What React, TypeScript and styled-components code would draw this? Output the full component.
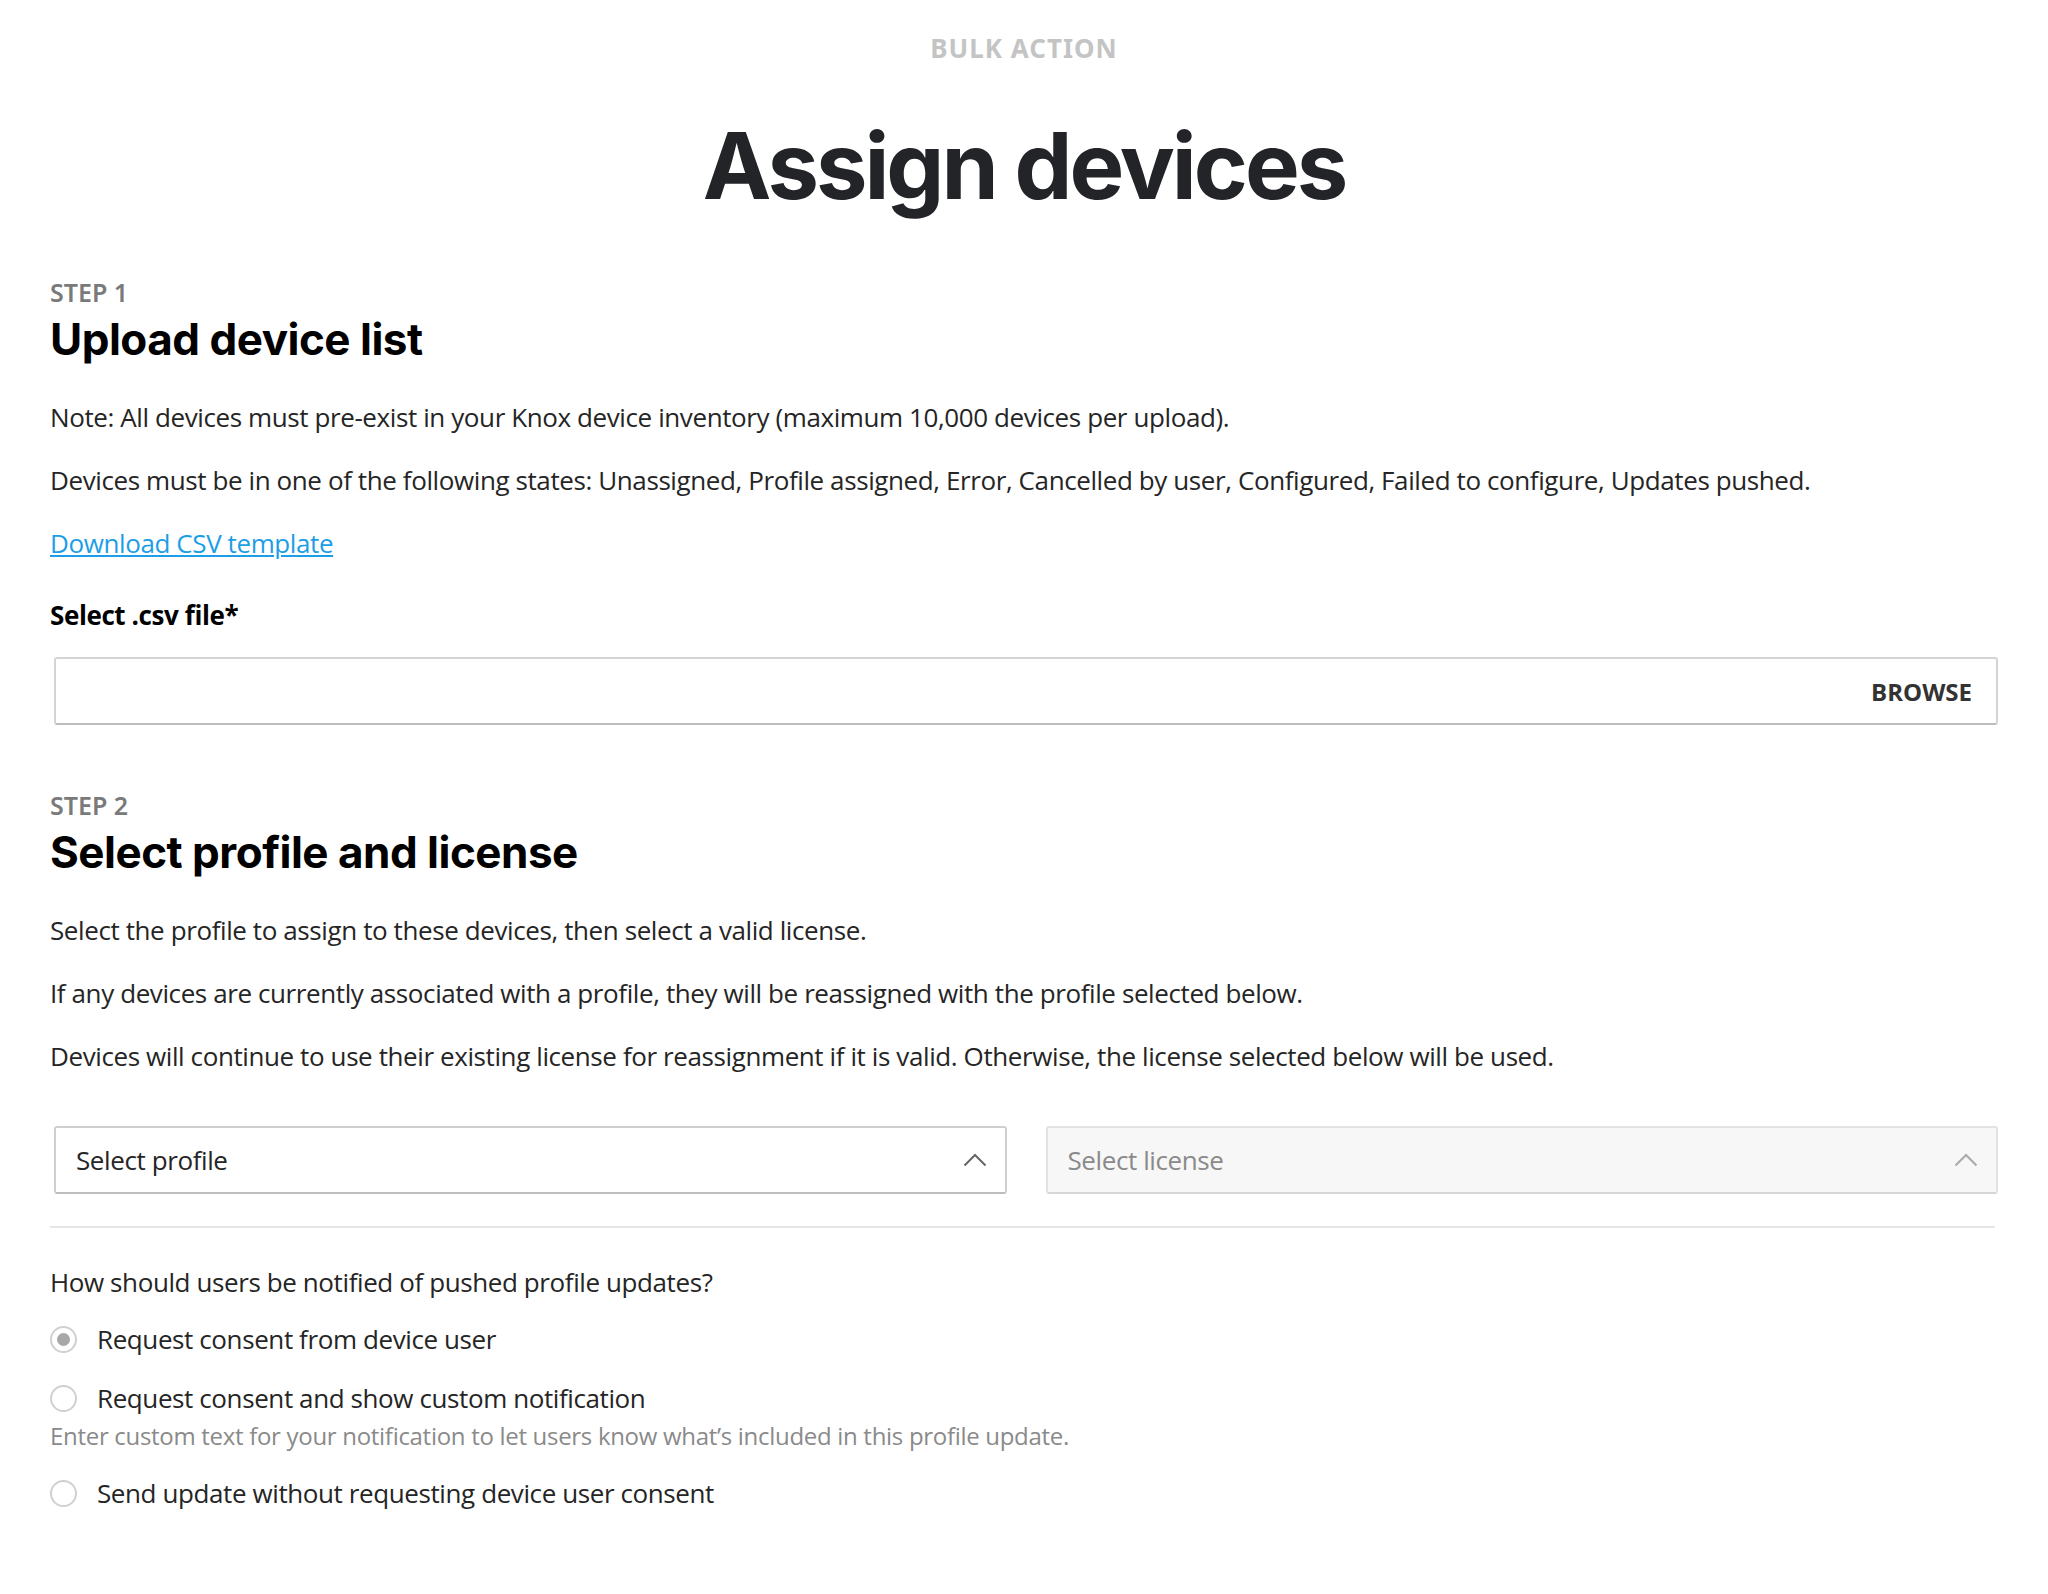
import React from "react";
import styled, { createGlobalStyle } from "styled-components";

const Global = createGlobalStyle`
  html, body { margin: 0; padding: 0; background: #fff; }
  body { font-family: "Open Sans", "Noto Sans", sans-serif; color: #252525; }
`;

const Page = styled.div`
  padding: 28px 50px 40px 50px;
  display: flex;
  flex-direction: column;
`;

const Eyebrow = styled.div`
  text-align: center;
  font-family: "Noto Sans", sans-serif;
  font-weight: 700;
  font-size: 26px;
  letter-spacing: 1px;
  color: #c4c4c4;
  line-height: 40px;
`;

const Title = styled.h1`
  margin: 48px 0 0;
  text-align: center;
  font-family: "Inter", sans-serif;
  font-weight: 700;
  font-size: 92px;
  letter-spacing: -3px;
  line-height: 100px;
  color: #222428;
`;

const Step = styled.div<{ $top: number }>`
  margin-top: ${(p) => p.$top}px;
  font-family: "Noto Sans", sans-serif;
  font-weight: 600;
  font-size: 25px;
  line-height: 32px;
  color: #7a7a7a;
`;

const Heading = styled.h2`
  margin: 4px 0 20px;
  font-family: "Inter", sans-serif;
  font-weight: 700;
  font-size: 44px;
  letter-spacing: -0.5px;
  line-height: 54px;
  color: #000;
`;

const Para = styled.p`
  margin: 0;
  font-size: 26px;
  line-height: 63px;
  letter-spacing: -0.4px;
  color: #252525;
`;

const Link = styled.a`
  font-size: 26px;
  line-height: 63px;
  letter-spacing: -0.4px;
  color: #1c9ee6;
  text-decoration: underline;
  cursor: pointer;
`;

const Label = styled.div`
  margin-top: 20px;
  font-size: 26px;
  font-weight: 700;
  line-height: 40px;
  letter-spacing: -0.4px;
  color: #000;
`;

const FileBox = styled.div`
  margin: 22px 0 0 4px;
  height: 64px;
  border: 2px solid #d4d4d4;
  border-bottom-color: #bdbdbd;
  border-radius: 3px;
  display: flex;
  align-items: center;
  justify-content: flex-end;
  padding: 0 24px;
`;

const Browse = styled.span`
  font-size: 24px;
  font-weight: 700;
  color: #333;
`;

const SelectRow = styled.div`
  margin: 38px 0 0 4px;
  display: grid;
  grid-template-columns: 1fr 1fr;
  gap: 39px;
`;

const SelectBox = styled.div<{ $disabled?: boolean }>`
  height: 64px;
  border: 2px solid ${(p) => (p.$disabled ? "#e2e2e2" : "#cfcfcf")};
  border-bottom-color: ${(p) => (p.$disabled ? "#d6d6d6" : "#bdbdbd")};
  border-radius: 3px;
  background: ${(p) => (p.$disabled ? "#f7f7f7" : "#fff")};
  display: flex;
  align-items: center;
  justify-content: space-between;
  padding: 0 18px 0 20px;
  font-size: 26px;
  letter-spacing: -0.4px;
  color: ${(p) => (p.$disabled ? "#8a8a8a" : "#252525")};
`;

const Divider = styled.hr`
  margin: 32px 3px 0 0;
  border: none;
  border-top: 2px solid #e6e6e6;
`;

const Question = styled.div`
  margin-top: 26px;
  font-size: 26px;
  line-height: 56px;
  letter-spacing: -0.4px;
`;

const RadioRow = styled.label`
  display: flex;
  align-items: center;
  gap: 20px;
  font-size: 26px;
  letter-spacing: -0.4px;
  line-height: 59px;
  color: #252525;
`;

const Circle = styled.span<{ $on?: boolean }>`
  width: 23px;
  height: 23px;
  border-radius: 50%;
  border: 2px solid #d0d0d0;
  display: flex;
  align-items: center;
  justify-content: center;
  flex-shrink: 0;
  &::after {
    content: "";
    width: 13px;
    height: 13px;
    border-radius: 50%;
    background: ${(p) => (p.$on ? "#a8a8a8" : "transparent")};
  }
`;

const Helper = styled.div`
  margin-top: -14px;
  font-size: 24px;
  line-height: 44px;
  letter-spacing: -0.3px;
  color: #8a8a8a;
  margin-bottom: 6px;
`;

const Chevron = ({ color }: { color: string }) => (
  <svg width="24" height="14" viewBox="0 0 24 14" fill="none">
    <path d="M1.5 12.5 L12 2 L22.5 12.5" stroke={color} strokeWidth="2" />
  </svg>
);

export default function App() {
  return (
    <>
      <Global />
      <Page>
        <Eyebrow>BULK ACTION</Eyebrow>
        <Title>Assign devices</Title>
        <Step $top={60}>STEP 1</Step>
        <Heading>Upload device list</Heading>
        <Para>Note: All devices must pre-exist in your Knox device inventory (maximum 10,000 devices per upload).</Para>
        <Para>Devices must be in one of the following states: Unassigned, Profile assigned, Error, Cancelled by user, Configured, Failed to configure, Updates pushed.</Para>
        <div><Link>Download CSV template</Link></div>
        <Label>Select .csv file*</Label>
        <FileBox><Browse>BROWSE</Browse></FileBox>
        <Step $top={64}>STEP 2</Step>
        <Heading>Select profile and license</Heading>
        <Para>Select the profile to assign to these devices, then select a valid license.</Para>
        <Para>If any devices are currently associated with a profile, they will be reassigned with the profile selected below.</Para>
        <Para>Devices will continue to use their existing license for reassignment if it is valid. Otherwise, the license selected below will be used.</Para>
        <SelectRow>
          <SelectBox>Select profile<Chevron color="#666" /></SelectBox>
          <SelectBox $disabled>Select license<Chevron color="#aaa" /></SelectBox>
        </SelectRow>
        <Divider />
        <Question>How should users be notified of pushed profile updates?</Question>
        <RadioRow><Circle $on />Request consent from device user</RadioRow>
        <RadioRow><Circle />Request consent and show custom notification</RadioRow>
        <Helper>Enter custom text for your notification to let users know what’s included in this profile update.</Helper>
        <RadioRow><Circle />Send update without requesting device user consent</RadioRow>
      </Page>
    </>
  );
}
